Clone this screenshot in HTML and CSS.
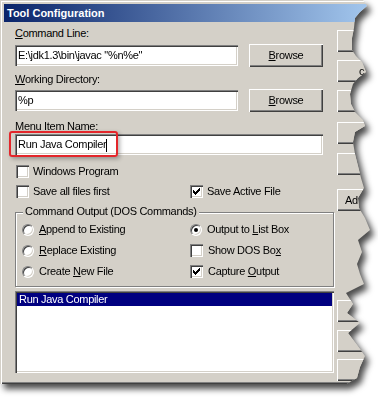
FILE: index.html
```html
<!DOCTYPE html>
<html>
<head>
<meta charset="utf-8">
<link rel="stylesheet" href="styles.css">
</head>
<body>
<div class="page">
  <div class="paper">
    <div class="tear">
      <div class="window">
        <div class="titlebar">Tool Configuration</div>
        <div class="client">
          <div class="main">
            <div class="label lbl-cmd"><u>C</u>ommand Line:</div>
            <div class="row row-cmd">
              <div class="field">E:\jdk1.3\bin\javac "%n%e"</div>
              <div class="btn"><u>B</u>rowse</div>
            </div>
            <div class="label lbl-dir"><u>W</u>orking Directory:</div>
            <div class="row row-dir">
              <div class="field">%p</div>
              <div class="btn"><u>B</u>rowse</div>
            </div>
            <div class="label lbl-menu"><u>M</u>enu Item Name:</div>
            <div class="field field-wide">Run Java Compiler<span class="caret"></span></div>
            <div class="checks checks-1">
              <div class="opt"><span class="chk"></span><span>Windows Program</span></div>
            </div>
            <div class="checks checks-2">
              <div class="opt opt-first"><span class="chk"></span><span>Save all files first</span></div>
              <div class="opt"><span class="chk"><svg class="tick" width="13" height="13" viewBox="0 0 13 13"><path d="M3 5h1v3h-1z M4 6h1v3h-1z M5 7h1v3h-1z M6 6h1v3h-1z M7 5h1v3h-1z M8 4h1v3h-1z M9 3h1v3h-1z"/></svg></span><span>Save Active File</span></div>
            </div>
            <div class="group">
              <div class="legend">Command Output (DOS Commands)</div>
              <div class="group-grid">
                <div class="opt"><span class="radio"></span><span><u>A</u>ppend to Existing</span></div>
                <div class="opt"><span class="radio on"></span><span>Output to <u>L</u>ist Box</span></div>
                <div class="opt"><span class="radio"></span><span><u>R</u>eplace Existing</span></div>
                <div class="opt"><span class="chk chk-in"></span><span>Show DOS Bo<u>x</u></span></div>
                <div class="opt"><span class="radio"></span><span>Create <u>N</u>ew File</span></div>
                <div class="opt"><span class="chk chk-in"><svg class="tick" width="13" height="13" viewBox="0 0 13 13"><path d="M3 5h1v3h-1z M4 6h1v3h-1z M5 7h1v3h-1z M6 6h1v3h-1z M7 5h1v3h-1z M8 4h1v3h-1z M9 3h1v3h-1z"/></svg></span><span>Capture <u>O</u>utput</span></div>
              </div>
            </div>
            <div class="listbox">
              <div class="list-item selected">Run Java Compiler</div>
            </div>
          </div>
          <div class="side">
            <div class="btn sbtn s1"></div>
            <div class="btn sbtn s2 left"><span class="ghost">c</span></div>
            <div class="btn sbtn s3"></div>
            <div class="btn sbtn s4"></div>
            <div class="btn sbtn s5"></div>
            <div class="btn sbtn s6 left">Ad</div>
            <div class="btn sbtn s7"></div>
            <div class="btn sbtn s8"></div>
            <div class="btn sbtn s9"></div>
          </div>
        </div>
      </div>
    </div>
  </div>
  <div class="highlight"></div>
</div>
</body>
</html>
```
FILE: styles.css
```css
* { box-sizing: border-box; }
body {
  margin: 0;
  background: #fff;
  font-family: "Liberation Sans", Arial, sans-serif;
  font-size: 11px;
  letter-spacing: -0.3px;
  color: #000;
}
.page { position: relative; width: 378px; height: 404px; overflow: hidden; }
.paper { width: 378px; height: 404px; filter: drop-shadow(4px 5px 3px rgba(0,0,0,0.7)); }
.tear {
  width: 378px; height: 404px; overflow: hidden;
  clip-path: polygon(0 0, 363px 0, 367px 6px, 360px 12px, 355px 18px, 354px 28px, 352px 38px, 352px 50px, 356px 56px, 362px 62px, 366px 72px, 358px 78px, 353px 84px, 350px 94px, 351px 104px, 355px 112px, 363px 120px, 365px 126px, 355px 132px, 353px 142px, 355px 154px, 358px 166px, 361px 178px, 364px 188px, 358px 198px, 359px 208px, 365px 218px, 370px 230px, 358px 240px, 362px 252px, 357px 264px, 360px 274px, 364px 284px, 346px 293px, 353px 304px, 347px 313px, 360px 323px, 348px 333px, 357px 345px, 365px 356px, 360px 367px, 357px 378px, 343px 386px, 300px 385px, 262px 384px, 214px 386px, 209px 392px, 204px 386px, 150px 386px, 146px 392px, 140px 386px, 60px 386px, 55px 393px, 50px 386px, 0 386px);
}
.window {
  width: 380px; height: 384px;
  background: #D4D0C8;
  padding: 4px;
  box-shadow: inset 1px 1px #D4D0C8, inset 2px 2px #fff, inset -1px -1px #404040, inset -2px -2px #808080;
  display: flex; flex-direction: column;
}
.titlebar {
  flex: none;
  height: 18px; line-height: 18px;
  padding-left: 3px;
  color: #fff; font-weight: bold; letter-spacing: 0;
  background: linear-gradient(90deg, #0A246A, #A6CAF0);
}
.client { display: flex; padding-left: 11px; gap: 3px; }
.main { width: 319px; flex: none; display: flex; flex-direction: column; }
.label { height: 13px; line-height: 13px; white-space: nowrap; }
.lbl-cmd { margin-top: 5px; }
.lbl-dir { margin-top: 6px; }
.lbl-menu { margin-top: 8px; }
.row { display: flex; align-items: center; justify-content: space-between; width: 308px; height: 23px; }
.row-cmd { margin-top: 4px; }
.row-dir { margin-top: 3px; }
.field {
  height: 21px; width: 223px; line-height: 21px;
  padding: 0 3px;
  background: #fff;
  box-shadow: inset 1px 1px #808080, inset 2px 2px #404040, inset -1px -1px #fff, inset -2px -2px #D4D0C8;
  white-space: nowrap; overflow: hidden;
}
.field-wide { width: 308px; margin-top: 1px; }
.caret { display: inline-block; width: 1px; height: 13px; background: #000; vertical-align: middle; }
.btn {
  flex: none;
  width: 74px; height: 23px; line-height: 23px;
  text-align: center; white-space: nowrap; overflow: hidden;
  background: #D4D0C8;
  box-shadow: inset 1px 1px #fff, inset -1px -1px #404040, inset -2px -2px #808080;
}
.checks { display: flex; height: 13px; padding-left: 1px; }
.checks-1 { margin-top: 10px; }
.checks-2 { margin-top: 7px; }
.opt { display: flex; align-items: center; line-height: 13px; white-space: nowrap; }
.opt-first { width: 174px; }
.chk {
  flex: none; display: block;
  width: 13px; height: 13px; margin-right: 4px;
  background: #fff;
  box-shadow: inset 1px 1px #808080, inset 2px 2px #404040, inset -1px -1px #fff, inset -2px -2px #D4D0C8;
}
.chk-in { margin-right: 5px; }
.tick { display: block; shape-rendering: crispEdges; }
.tick path { fill: #000; }
.radio {
  flex: none; display: flex; align-items: center; justify-content: center;
  width: 12px; height: 12px; margin-right: 5px;
  border-radius: 50%;
  background: #fff;
  border: 1px solid; border-color: #808080 #fff #fff #808080;
  box-shadow: inset 1px 1px #404040, inset -1px -1px #D4D0C8;
}
.radio.on::after { content: ""; width: 4px; height: 4px; border-radius: 50%; background: #000; }
.group {
  margin-top: 14px;
  height: 75px;
  border: 1px solid #808080;
  box-shadow: inset 1px 1px #fff, 1px 1px #fff;
  padding: 0 6px 4px;
}
.legend {
  width: max-content;
  margin: -8px 0 0 1px;
  padding: 0 2px;
  line-height: 13px;
  background: #D4D0C8;
}
.group-grid { margin-top: 1px; display: grid; grid-template-columns: 168px 1fr; grid-auto-rows: 21px; }
.listbox {
  margin-top: 4px; height: 82px;
  padding: 2px;
  background: #fff;
  box-shadow: inset 1px 1px #808080, inset 2px 2px #404040, inset -1px -1px #fff, inset -2px -2px #D4D0C8;
}
.list-item { height: 13px; line-height: 13px; padding-left: 2px; white-space: nowrap; }
.selected { background: #000080; color: #fff; }
.side { display: flex; flex-direction: column; width: 75px; flex: none; }
.sbtn { width: 75px; height: 22px; line-height: 22px; }
.left { text-align: left; padding-left: 8px; }
.ghost { padding-left: 14px; }
.s1 { margin-top: 8px; }
.s2 { margin-top: 8px; }
.s3 { margin-top: 8px; }
.s4 { margin-top: 10px; }
.s5 { margin-top: 9px; }
.s6 { margin-top: 14px; }
.s7 { margin-top: 89px; }
.s8 { margin-top: 8px; }
.s9 { margin-top: 7px; }
.highlight {
  position: absolute; left: 9px; top: 131px;
  width: 109px; height: 26px;
  border: 2px solid #E3262B; border-radius: 3px;
  box-shadow: 2px 2px 4px rgba(0,0,0,0.3);
}
```
